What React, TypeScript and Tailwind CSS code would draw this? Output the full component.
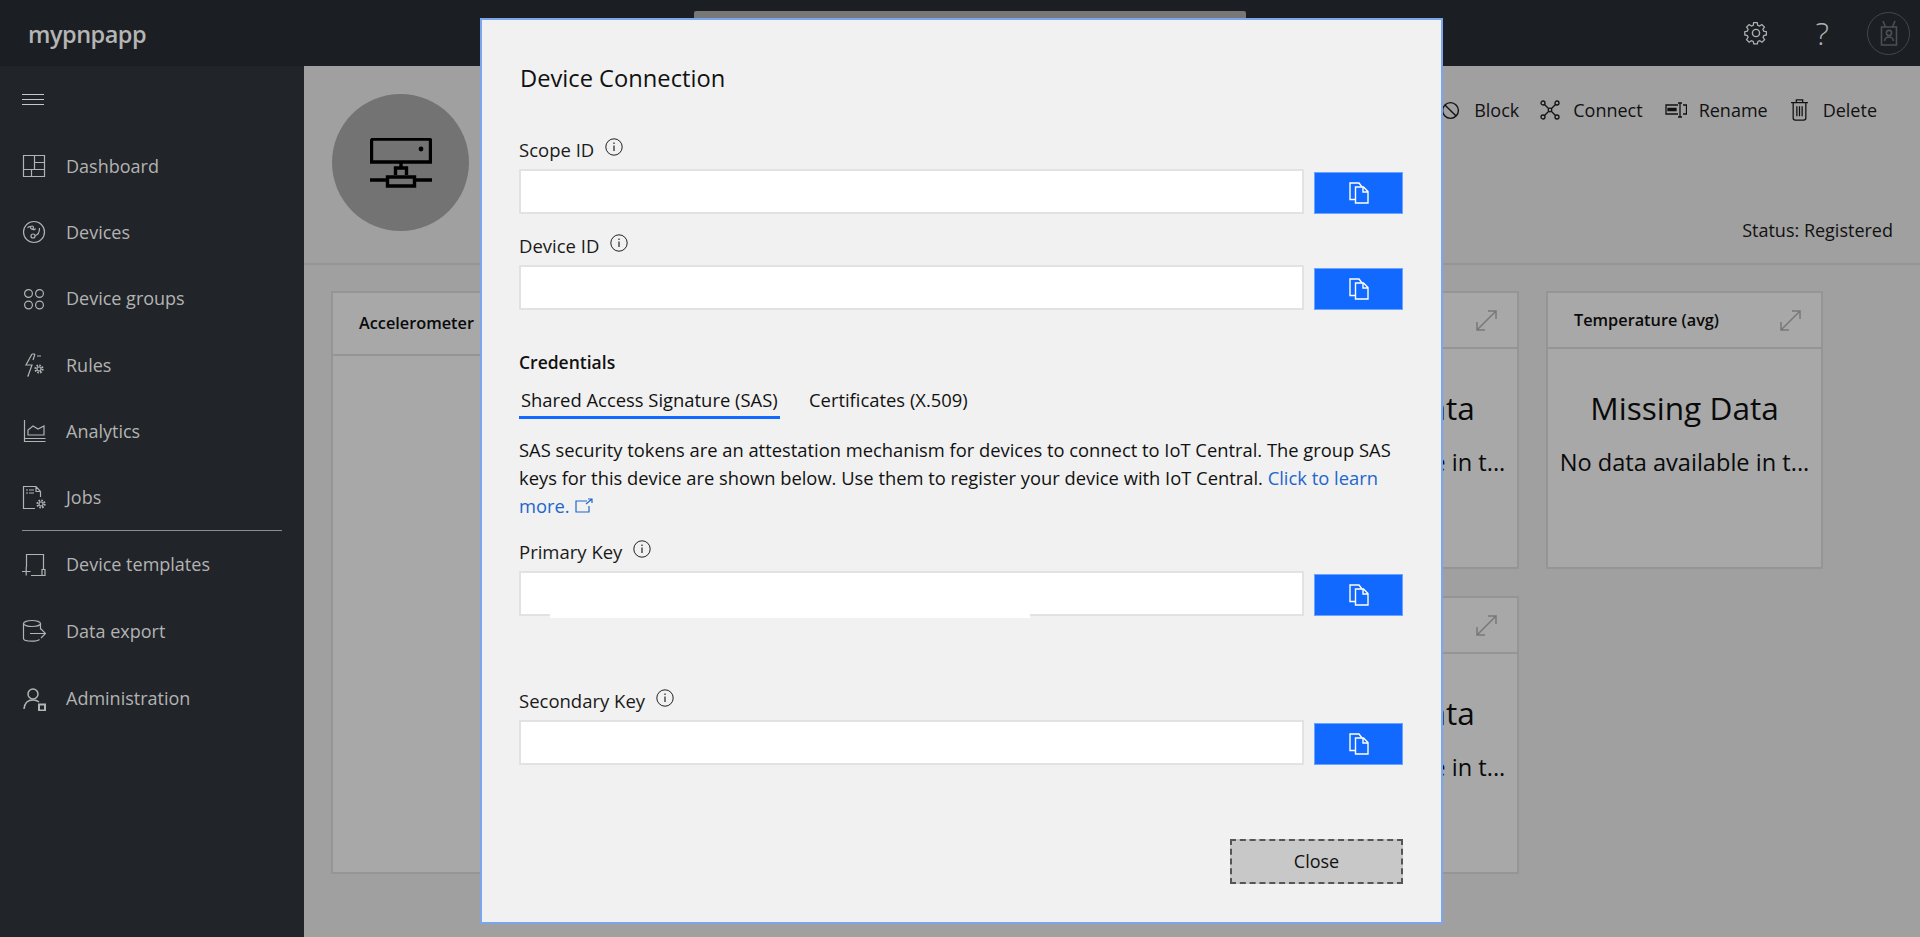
import React from "react";

const S = ({ children, w = 24, h = 24, vb, sw = 1.2, className = "" }: any) => (
  <svg width={w} height={h} viewBox={vb || `0 0 ${w} ${h}`} fill="none" stroke="currentColor" strokeWidth={sw} className={`shrink-0 ${className}`}>
    {children}
  </svg>
);

const Dash = () => (
  <S><path d="M1.500 1.500h21v21h-21zM12.500 1.500v14M1.500 15.500h21M12.500 8.500h10M9.500 15.500v7" /></S>
);
const Dev = () => (
  <S>
    <circle cx="12" cy="12" r="10.500" />
    <circle cx="11" cy="16" r="2" />
    <circle cx="10" cy="7.500" r="1.500" />
    <path d="M13 15.500c3-.5 4.500-3 4.500-7.500M9 7c-.5-.5-2-1-3.500 1" />
    <path d="M9.500 9c1.500 1 3.500 1 4-.5" />
  </S>
);
const Groups = () => (
  <S>
    <circle cx="6.500" cy="6.500" r="3.900" />
    <circle cx="17.500" cy="6.500" r="3.900" />
    <circle cx="6.500" cy="18" r="3.900" />
    <circle cx="17.500" cy="18" r="3.900" />
  </S>
);
const Gear = ({ x, y }: { x: number; y: number }) => (
  <g transform={`translate(${x} ${y})`}>
    <circle r="2" />
    <circle r="3.600" strokeDasharray="1.600 1.200" strokeWidth="2" />
  </g>
);
const Rules = () => (
  <S>
    <path d="M10 1 4 12h6l-4 11 1 0M13 1h-3M13 1l-2 6M15 3h4" />
    <Gear x={17} y={16} />
  </S>
);
const Analytics = () => (
  <S>
    <path d="M2.500 1v21.500h21M2.500 19.500h21" />
    <path d="M6 16V11l5-4 5 3 6-3v9z" />
  </S>
);
const Jobs = () => (
  <S>
    <path d="M13 23.500H1.500V1.500H14l4.500 5V12M14 1.500v5h4.500M4 5h2M7 5h5M4 8h2M7 8h5" />
    <Gear x={19} y={19} />
  </S>
);
const Tmpl = () => (
  <S>
    <path d="M4.500 14V1.500h17v15M0 18.500h8.500M4.200 14v8.500M9 22.500h14v-6h-3v6" />
  </S>
);
const Exp = () => (
  <S>
    <ellipse cx="10" cy="4.500" rx="8.500" ry="3" />
    <path d="M1.500 4.500v15c0 2 4 2.700 8.500 2.700 3 0 6-.5 7.500-1.700M18.500 4.500v6M8 14.500h15M19 10l4.500 4.500-4.500 4.500" />
  </S>
);
const Admin = () => (
  <S sw={1.500}>
    <circle cx="11" cy="7" r="5" />
    <path d="M2 22c.5-6 4-9 9-9 2.500 0 4.500.700 6 2" />
    <path d="M17 17.500h6v6h-6z" strokeWidth="2" />
  </S>
);

const Nav = ({ icon, label, cls }: any) => (
  <div className={`flex items-center pl-[22px] ${cls || "h-[66px]"}`}>
    <span className="w-[44px] flex items-center">{icon}</span>
    <span className="text-[18px] text-[#b3b3b3]">{label}</span>
  </div>
);

const Expand = () => (
  <svg width="21" height="21" viewBox="0 0 21 21" fill="none" stroke="#787878" strokeWidth="1.500">
    <path d="M1 20 20 1M12 1h8v8M1 12v8h8" />
  </svg>
);

const Card = ({ title }: { title: string }) => (
  <div className="h-[278px] border-2 border-[#959595] bg-[#a8a8a8] flex flex-col">
    <div className="h-[56px] flex items-center justify-between pl-[26px] pr-[20px] border-b-2 border-[#959595]">
      <span className="text-[16.300px] font-semibold text-[#0a0a0a] whitespace-nowrap">{title}</span>
      <Expand />
    </div>
    <div className="flex flex-col items-center pt-[38px] text-[#0a0a0a] whitespace-nowrap">
      <span className="text-[31.600px] leading-[42px]">Missing Data</span>
      <span className="text-[23.600px] leading-[32px] mt-[17px]">No data available in t...</span>
    </div>
  </div>
);

const Info = () => (
  <svg width="18" height="18" viewBox="0 0 18 18" fill="none" stroke="#222" strokeWidth="1">
    <circle cx="9" cy="9" r="8.200" />
    <path d="M9 7.500v5.500M9 4.500v1.500" strokeWidth="1.200" />
  </svg>
);

const Copy = () => (
  <svg width="20" height="22" viewBox="0 0 20 22" fill="none" stroke="#fff" strokeWidth="1.400">
    <path d="M6 17.500H1V1h9l3 4" />
    <path d="M6.500 5h8l4.500 4.500V21H6.500zM14 5v5h5" />
  </svg>
);

const Field = ({ label, cls, patch }: any) => (
  <div className={`flex flex-col ${cls}`}>
    <div className="h-[28px] pb-[10px] flex items-center text-[18.500px] text-[#1a1a1a]">
      <span>{label}</span>
      <span className="ml-[11px] -mt-[6px]"><Info /></span>
    </div>
    <div className="flex items-start">
      <div className="relative w-[785px] h-[45px] bg-white border-2 border-[#e2e2e2]">
        {patch}
      </div>
      <button className="ml-[10px] mt-[3px] w-[89px] h-[42px] bg-[#1169ff] border border-[#6ba3ff] flex items-center justify-center">
        <Copy />
      </button>
    </div>
  </div>
);

const Act = ({ icon, label, cls }: any) => (
  <div className={`flex items-center ${cls}`}>
    {icon}
    <span className="text-[18px] text-[#111]">{label}</span>
  </div>
);

export default function App() {
  return (
    <div className="relative h-[937px] w-[1920px] overflow-hidden bg-[#a0a0a0] font-['Open_Sans','Liberation_Sans',sans-serif]">
      <header className="h-[66px] bg-[#1b1f23] flex items-center">
        <span className="ml-[28px] mt-[4px] text-[23.500px] font-semibold text-[#b5b5b5] tracking-[-0.5px]">mypnpapp</span>
        <div className="ml-auto flex items-center text-[#b0b0b0]">
          <svg width="24" height="24" viewBox="0 0 24 24" fill="none" stroke="currentColor" strokeWidth="1.400">
            <circle cx="12" cy="12" r="3.600" />
            <path d="M10 1.500h4l.6 3 2 .9 2.600-1.700 2.800 2.800-1.700 2.600.9 2 3 .6v3.600l-2.800.6-.9 2 1.700 2.600-2.800 2.800-2.600-1.700-2 .9-.6 2.800h-4l-.6-2.800-2-.9-2.600 1.700-2.800-2.800 1.700-2.600-.9-2-2.800-.6v-3.600l2.800-.6.900-2-1.700-2.600 2.800-2.800 2.600 1.700 2-.9z" transform="translate(0.600 0.200) scale(.9)" />
          </svg>
          <span className="ml-[48px] text-[32px] font-light leading-none text-[#b0b0b0]">?</span>
          <div className="ml-[38px] mr-[10px] w-[43px] h-[43px] rounded-full border border-[#44474b] flex items-center justify-center text-[#4c4f53]">
            <svg width="18" height="26" viewBox="0 0 18 26" fill="none" stroke="currentColor" strokeWidth="1.600">
              <path d="M1.500 7h15v18h-15zM5.500 7 3 1M12.500 7 15 1" />
              <circle cx="9" cy="13" r="2.600" />
              <path d="M4.500 21c.5-3 2.200-4 4.500-4s4 1 4.500 4" />
            </svg>
          </div>
        </div>
      </header>

      <div className="flex h-[871px]">
        <aside className="w-[304px] bg-[#212429] shrink-0 text-[#b3b3b3]">
          <div className="h-[67px] pl-[22px] pt-[28px]">
            <div className="w-[22px] flex flex-col gap-[4px]">
              <div className="h-px bg-[#c8c8c8]" />
              <div className="h-px bg-[#c8c8c8]" />
              <div className="h-px bg-[#c8c8c8]" />
            </div>
          </div>
          <Nav icon={<Dash />} label="Dashboard" />
          <Nav icon={<Dev />} label="Devices" />
          <Nav icon={<Groups />} label="Device groups" cls="h-[67px]" />
          <Nav icon={<Rules />} label="Rules" />
          <Nav icon={<Analytics />} label="Analytics" />
          <Nav icon={<Jobs />} label="Jobs" />
          <div className="mx-[22px] h-px bg-[#8e8e8e]" />
          <Nav icon={<Tmpl />} label="Device templates" cls="h-[67px]" />
          <Nav icon={<Exp />} label="Data export" />
          <Nav icon={<Admin />} label="Administration" cls="h-[69px]" />
        </aside>

        <main className="flex-1">
          <section className="relative h-[199px] border-b-2 border-[#959595] flex">
            <div className="ml-[28px] mt-[28px] w-[137px] h-[137px] rounded-full bg-[#737373] flex items-center justify-center text-black">
              <svg width="62" height="50" viewBox="0 0 62 50" fill="none" stroke="currentColor" strokeWidth="3.400">
                <path d="M1.500 24V3a2 2 0 0 1 2-2h55a2 2 0 0 1 2 2v21zM31 24v6M25.500 37v-7h11v7M17.500 48v-9h27v9zM0 42h17.500M44.500 42H62" />
                <circle cx="51" cy="11" r="2.400" fill="currentColor" stroke="none" />
              </svg>
            </div>
            <div className="ml-auto mr-[43px] flex flex-col items-end">
              <div className="flex items-center h-[30px] mt-[29px]">
                <Act label="Block" cls="mr-[21px]" icon={
                  <svg className="mr-[14px]" width="19" height="19" viewBox="0 0 18 18" fill="none" stroke="#111" strokeWidth="1.300"><circle cx="9" cy="9" r="7.500" /><path d="M3.700 3.700 14.300 14.300" /></svg>
                } />
                <Act label="Connect" cls="mr-[22px]" icon={
                  <svg className="mr-[13px]" width="20" height="20" viewBox="0 0 20 20" fill="none" stroke="#111" strokeWidth="1.300"><circle cx="3" cy="3" r="2" /><circle cx="17" cy="3" r="2" /><circle cx="3" cy="17" r="2" /><circle cx="17" cy="17" r="2" /><circle cx="10" cy="10" r="1.800" /><path d="m4.500 4.500 4 4M15.500 4.500l-4 4M4.500 15.500l4-4M15.500 15.500l-4-4" /></svg>
                } />
                <Act label="Rename" cls="mr-[22px]" icon={
                  <svg className="mr-[12px]" width="22" height="16" viewBox="0 0 22 16" fill="none" stroke="#111" strokeWidth="1.300"><path d="M13 3H1v9h12M18 3h3.500v9H18M13 1h4M13 15h4M15 1v14" /><path d="M3 6.500h8v2H3z" fill="#111" /></svg>
                } />
                <Act label="Delete" icon={
                  <svg className="mr-[14px]" width="19" height="24" viewBox="0 0 18 21" fill="none" stroke="#111" strokeWidth="1.200"><path d="M1 3.500h16M3 3.500V18a2 2 0 0 0 2 2h8a2 2 0 0 0 2-2V3.500M6 3.500V1h6v2.500M6.500 7v9.500M9 7v9.500M11.500 7v9.500" /></svg>
                } />
              </div>
              <span className="mt-[92px] mr-[-16px] text-[18px] text-[#111] whitespace-nowrap">Status: Registered</span>
            </div>
          </section>

          <section className="pt-[26px] pl-[27px] grid grid-cols-[884px_277px_277px] gap-x-[27px] gap-y-[27px]">
            <div className="row-span-2 border-2 border-[#959595] bg-[#a8a8a8]">
              <div className="h-[63px] flex items-center pl-[26px] border-b-2 border-[#959595]">
                <span className="text-[16.300px] font-semibold text-[#0a0a0a]">Accelerometer</span>
              </div>
            </div>
            <Card title="Humidity (avg)" />
            <Card title="Temperature (avg)" />
            <Card title="Pressure (avg)" />
          </section>
        </main>
      </div>

      <div className="absolute left-[694px] top-[11px] w-[552px] h-[8px] bg-[#777] rounded-t-[2px]" />

      <div className="absolute left-[480px] top-[18px] w-[963px] h-[906px] bg-[#f1f1f1] border-2 border-[#7ba6ee] pl-[37px] flex flex-col">
        <h2 className="mt-[41px] ml-[1px] text-[23.700px] leading-[34px] text-[#111]">Device Connection</h2>
        <Field label="Scope ID" cls="mt-[46px]" />
        <Field label="Device ID" cls="mt-[23px]" />
        <div className="mt-[40px] h-[24px] flex items-center text-[17.500px] font-semibold text-[#111]">Credentials</div>
        <div className="mt-[13px] flex text-[18.400px] leading-[26px] text-[#111] whitespace-nowrap">
          <div className="w-[261px] h-[32px] border-b-[3px] border-[#1169ff] pl-[2px]">Shared Access Signature (SAS)</div>
          <div className="ml-[29px]">Certificates (X.509)</div>
        </div>
        <p className="mt-[17px] w-[884px] text-[18.350px] leading-[28px] text-[#111]">
          SAS security tokens are an attestation mechanism for devices to connect to IoT Central. The group SAS keys for this device are shown below. Use them to register your device with IoT Central.{" "}
          <span className="text-[#2266cc]">Click to learn more.</span>
          <svg className="inline ml-[5px] mb-[6px]" width="18" height="15" viewBox="0 0 18 15" fill="none" stroke="#2266cc" strokeWidth="1.200"><path d="M12 3H1v11h13V8M11 6l6-5M13 1h4v4" /></svg>
        </p>
        <Field label="Primary Key" cls="mt-[23px]" patch={
          <div className="absolute left-[29px] top-[38px] w-[480px] h-[7px] bg-white" />
        } />
        <Field label="Secondary Key" cls="mt-[76px]" />
        <div className="mt-[74px] mr-[38px] flex justify-end">
          <button className="w-[173px] h-[45px] bg-[#c8c8c8] border-2 border-dashed border-[#555] text-[18px] text-[#111]">Close</button>
        </div>
      </div>
    </div>
  );
}
